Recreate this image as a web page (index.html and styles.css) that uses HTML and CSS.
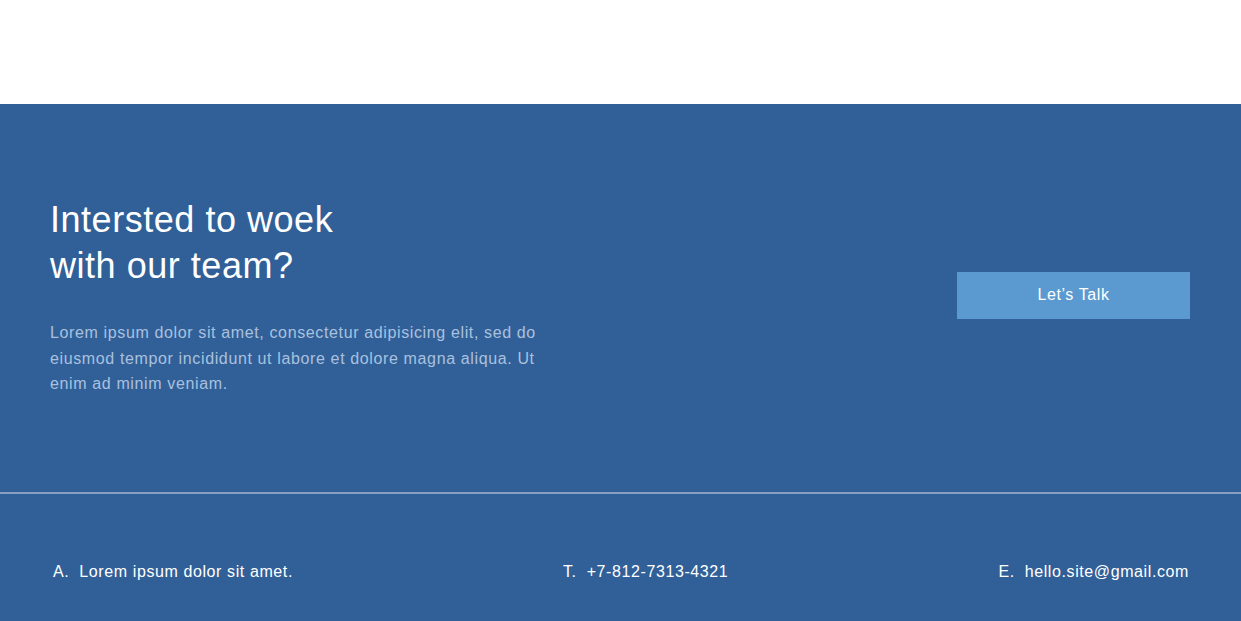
FILE: index.html
```html
<!DOCTYPE html>
<html lang="en">
<head>
<meta charset="utf-8">
<title>Contact</title>
<link rel="stylesheet" href="styles.css">
</head>
<body>
<div class="top-space"></div>
<section class="cta">
  <div class="cta-row">
    <div class="cta-text">
      <h2 class="cta-title">Intersted to woek<br>with our team?</h2>
      <p class="cta-desc">Lorem ipsum dolor sit amet, consectetur adipisicing elit, sed do eiusmod tempor incididunt ut labore et dolore magna aliqua. Ut enim ad minim veniam.</p>
    </div>
    <a class="cta-btn" href="#">Let’s Talk</a>
  </div>
  <div class="divider"></div>
  <div class="contacts">
    <div class="contact"><span class="label">A.</span>Lorem ipsum dolor sit amet.</div>
    <div class="contact"><span class="label">T.</span>+7-812-7313-4321</div>
    <div class="contact"><span class="label">E.</span>hello.site@gmail.com</div>
  </div>
</section>
</body>
</html>
```

FILE: styles.css
```css
html, body {
  margin: 0;
  padding: 0;
}
body {
  font-family: "Liberation Sans", Arial, sans-serif;
  background: #ffffff;
  overflow: hidden;
}
.top-space {
  height: 104px;
  background: #ffffff;
}
.cta {
  background: #316098;
  color: #ffffff;
  height: 517px;
}
.cta-row {
  display: flex;
  align-items: center;
  justify-content: space-between;
  padding: 93px 51px 95.5px 50px;
}
.cta-title {
  margin: 0;
  font-size: 36px;
  line-height: 46px;
  font-weight: normal;
  letter-spacing: 0.53px;
  color: #ffffff;
}
.cta-desc {
  margin: 31px 0 0 0;
  width: 500px;
  font-size: 16px;
  line-height: 25.5px;
  letter-spacing: 0.63px;
  color: #a9c1df;
}
.cta-btn {
  display: flex;
  align-items: center;
  justify-content: center;
  width: 233px;
  height: 47px;
  margin-bottom: 3px;
  background: #5a9ad0;
  color: #ffffff;
  text-decoration: none;
  font-size: 16px;
  letter-spacing: 0.6px;
}
.divider {
  height: 2px;
  background: #869fc2;
}
.contacts {
  display: flex;
  justify-content: space-between;
  padding: 68px 52px 0 53px;
  font-size: 16px;
  line-height: 20px;
  letter-spacing: 0.6px;
  color: #ffffff;
}
.label {
  margin-right: 10px;
}
```
